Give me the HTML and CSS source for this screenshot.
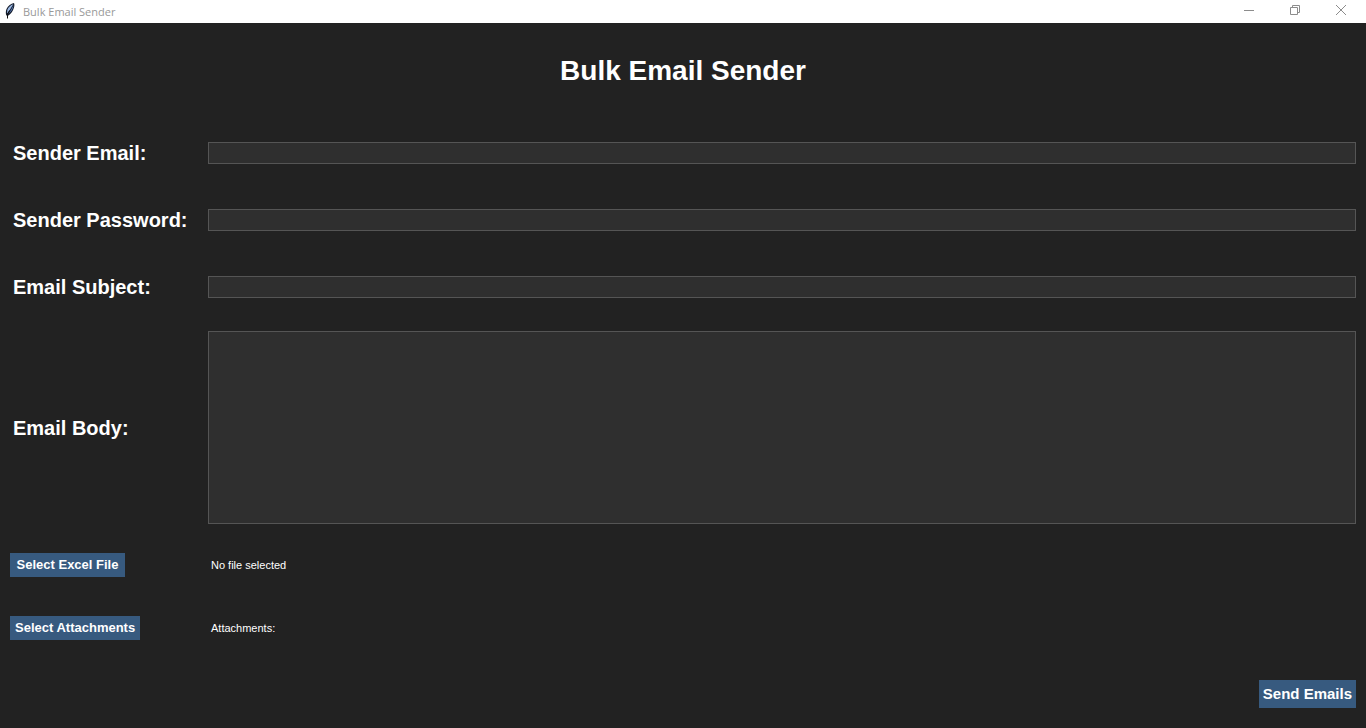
FILE: index.html
```html
<!DOCTYPE html>
<html lang="en">
<head>
<meta charset="utf-8">
<title>Bulk Email Sender</title>
<link rel="stylesheet" href="styles.css">
</head>
<body>
<header class="titlebar">
  <svg class="app-icon" width="16" height="16" viewBox="0 0 16 16" aria-hidden="true">
    <path d="M12 0C9 0.500 6 2.500 4.500 6C3.700 8 3.600 10.500 4.300 12.500L6.500 12.500C9 11 11 8 12 4.500C12.500 2.800 12.500 1.200 12 0Z" fill="#141c2c"/>
    <path d="M11.300 1.200C8.500 2 6.300 4.300 5.300 7L5 10.500C7.500 8 9 4.500 11.300 1.200Z" fill="#9ab8e4"/>
    <path d="M11.500 2C10 5.500 8 8.800 6 11.200C8.800 9.500 11.200 6 11.500 2Z" fill="#5a7ebc"/>
    <path d="M7.500 7.500L5.500 11.500V15.500" fill="none" stroke="#111111"/>
  </svg>
  <span class="window-title">Bulk Email Sender</span>
  <div class="window-controls">
    <button class="window-button" type="button" aria-label="Minimize">
      <svg width="12" height="12" viewBox="0 0 12 12"><path d="M1 6.500H11"/></svg>
    </button>
    <button class="window-button" type="button" aria-label="Restore">
      <svg width="12" height="12" viewBox="0 0 12 12"><path d="M1.500 3.500H8.500V10.500H1.500ZM3.500 3.500V1.500H10.500V8.500H8.500"/></svg>
    </button>
    <button class="window-button" type="button" aria-label="Close">
      <svg width="12" height="12" viewBox="0 0 12 12"><path d="M1 1L11 11M11 1L1 11"/></svg>
    </button>
  </div>
</header>
<main class="app">
  <h1 class="heading">Bulk Email Sender</h1>
  <form class="form">
    <div class="fields">
      <div class="row">
        <label class="label" for="email">Sender Email:</label>
        <input class="field" id="email" type="email">
      </div>
      <div class="row">
        <label class="label" for="password">Sender Password:</label>
        <input class="field" id="password" type="password">
      </div>
      <div class="row">
        <label class="label" for="subject">Email Subject:</label>
        <input class="field" id="subject" type="text">
      </div>
    </div>
    <div class="row row-body">
      <label class="label" for="body">Email Body:</label>
      <textarea class="field field-body" id="body"></textarea>
    </div>
    <div class="files">
      <div class="row">
        <button class="button" type="button">Select Excel File</button>
        <output class="status">No file selected</output>
      </div>
      <div class="row">
        <button class="button" type="button">Select Attachments</button>
        <output class="status">Attachments:</output>
      </div>
    </div>
    <button class="button button-send" type="submit">Send Emails</button>
  </form>
</main>
</body>
</html>
```
FILE: styles.css
```css
* {
  box-sizing: border-box;
}

body {
  margin: 0;
  min-height: 100vh;
  display: flex;
  flex-direction: column;
  background: #222222;
  color: #ffffff;
  font-family: "Liberation Sans", Arial, sans-serif;
}

.titlebar {
  display: flex;
  align-items: center;
  height: 23px;
  padding-left: 2px;
  background: #ffffff;
}

.app-icon {
  margin-bottom: 1px;
}

.window-title {
  margin-left: 5px;
  color: #999999;
  font: 11px/22px "Open Sans", "Noto Sans", sans-serif;
}

.window-controls {
  display: flex;
  margin-left: auto;
  margin-bottom: 3px;
  padding-right: 2px;
}

.window-button {
  display: grid;
  place-items: center;
  width: 46px;
  height: 20px;
  padding: 0;
  border: 0;
  background: none;
}

.window-button path {
  fill: none;
  stroke: #8c8c8c;
}

.app {
  flex: 1;
  display: flex;
  flex-direction: column;
  padding: 30px 10px 20px;
}

.heading {
  margin: 0;
  font-size: 28px;
  line-height: 36px;
  text-align: center;
}

.form {
  flex: 1;
  display: flex;
  flex-direction: column;
  padding-top: 53px;
}

.fields {
  display: grid;
  gap: 45px;
}

.row {
  display: grid;
  grid-template-columns: 198px 1fr;
  align-items: center;
}

.row-body {
  flex: 1;
  margin: 33px 0 29px;
}

.label {
  padding-left: 3px;
  font-size: 20px;
  font-weight: bold;
  line-height: 22px;
}

.field {
  width: 100%;
  height: 22px;
  margin: 0;
  padding: 2px 4px;
  border: 1px solid #555555;
  border-radius: 0;
  outline: 0;
  background: #2f2f2f;
  color: #ffffff;
  font: 12px "Liberation Sans", Arial, sans-serif;
}

.field-body {
  height: 100%;
  resize: none;
}

.files {
  display: grid;
  gap: 39px;
}

.button {
  justify-self: start;
  padding: 0 4px;
  border: 0;
  background: #375a7f;
  color: #ffffff;
  font: bold 13px/24px "Liberation Sans", Arial, sans-serif;
}

.files .button {
  min-width: 115px;
  padding: 0 5px;
}

.status {
  padding-left: 3px;
  font-size: 11px;
}

.button-send {
  align-self: flex-end;
  margin-top: 40px;
  font-size: 15px;
  line-height: 28px;
}
```
